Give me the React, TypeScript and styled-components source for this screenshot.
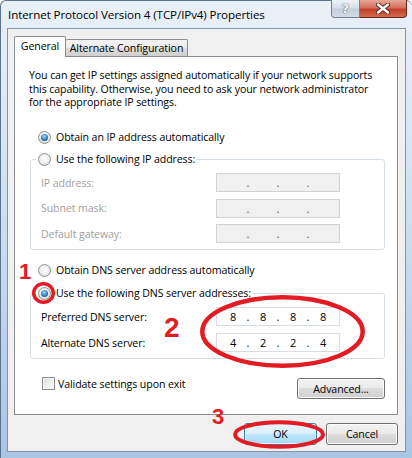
import { Fragment } from 'react';
import styled, { createGlobalStyle, css } from 'styled-components';

const GlobalStyle = createGlobalStyle`
  html, body {
    margin: 0;
    padding: 0;
  }
  body {
    width: 412px;
    height: 458px;
    overflow: hidden;
    background: #fff;
    font-family: 'Open Sans', 'Noto Sans', sans-serif;
    font-size: 10.6px;
    letter-spacing: -0.1px;
    color: #000;
  }
  * {
    box-sizing: border-box;
  }
`;

const RED = '#e31b23';

const Window = styled.div`
  position: relative;
  width: 412px;
  height: 458px;
  display: flex;
  flex-direction: column;
  border: 1px solid #5d728c;
  border-right: 0;
  border-bottom: 0;
  border-radius: 6px 6px 0 0;
  background: linear-gradient(
    180deg,
    #e9f0f8 0%,
    #d9e6f3 30%,
    #c2d6ec 65%,
    #aac5e4 100%
  );
`;

const TitleBar = styled.div`
  height: 27px;
  display: flex;
  align-items: flex-start;
  padding-left: 7px;
`;

const Title = styled.div`
  align-self: center;
  font-size: 11.6px;
  white-space: nowrap;
`;

const CaptionButtons = styled.div`
  display: flex;
  margin-left: auto;
  margin-right: 5px;
  margin-top: -1px;
`;

const CaptionButton = styled.div<{ $close?: boolean }>`
  height: 18px;
  width: ${(p) => (p.$close ? '47px' : '29px')};
  display: flex;
  align-items: center;
  justify-content: center;
  border: 1px solid #6e7f93;
  border-top: 0;
  font-family: 'DejaVu Sans', sans-serif;
  font-size: 13px;
  font-weight: 700;
  color: #f4f6f8;
  text-shadow: 0 0 1px #4a5868, 0 0 1px #4a5868;
  ${(p) =>
    p.$close
      ? css`
          border-color: #6a2a1e;
          border-left: 0;
          border-radius: 0 0 4px 0;
          background: linear-gradient(180deg, #e8a898 0%, #d4705e 45%, #c2402a 55%, #d06a4e 100%);
        `
      : css`
          border-radius: 0 0 0 4px;
          background: linear-gradient(180deg, #eef2f7 0%, #d6dfea 45%, #c3cfdd 55%, #d3dce8 100%);
        `}
`;

const Body = styled.div`
  flex: 1;
  margin: 0 6px 6px 6px;
  border: 1px solid #8394a9;
  background: #f0f0f0;
  padding: 7px 7px 6px 6px;
  display: flex;
  flex-direction: column;
`;

const TabStrip = styled.div`
  height: 20px;
  display: flex;
  align-items: flex-end;
`;

const Tab = styled.div<{ $active?: boolean }>`
  position: relative;
  display: flex;
  align-items: center;
  justify-content: center;
  border: 1px solid #898c95;
  border-bottom: 0;
  border-radius: 2px 2px 0 0;
  ${(p) =>
    p.$active
      ? css`
          width: 52px;
          height: 21px;
          margin-bottom: -1px;
          padding-bottom: 2px;
          background: #fff;
          z-index: 1;
        `
      : css`
          width: 122px;
          height: 17px;
          border-left: 0;
          background: linear-gradient(180deg, #f3f3f3 0%, #ebebeb 50%, #dddddd 51%, #cfcfcf 100%);
        `}
`;

const Panel = styled.div`
  height: 359px;
  border: 1px solid #898c95;
  background: #fff;
  display: flex;
  flex-direction: column;
`;

const Description = styled.p`
  margin: 12px 0 0 14px;
  line-height: 13.5px;
  white-space: nowrap;
`;

const OptionRow = styled.label<{ $top: number }>`
  display: flex;
  align-items: center;
  gap: 5px;
  height: 15px;
  margin-top: ${(p) => p.$top}px;
  padding-left: 23px;
  white-space: nowrap;
`;

const Radio = styled.span<{ $checked?: boolean }>`
  position: relative;
  flex: none;
  width: 13px;
  height: 13px;
  border-radius: 50%;
  border: 1px solid #8e8f8f;
  background: radial-gradient(circle at 50% 40%, #ffffff 0%, #ececec 55%, #cfcfcf 100%);
  ${(p) =>
    p.$checked &&
    css`
      &::after {
        content: '';
        position: absolute;
        inset: 2px;
        border-radius: 50%;
        background: radial-gradient(circle at 45% 35%, #b4e0fa 0%, #3b8ad0 45%, #0f3c6c 100%);
      }
    `}
`;

const Group = styled.fieldset<{ $top: number }>`
  margin: ${(p) => p.$top}px 12px 0 15px;
  padding: 0;
  border: 1px solid #d5dfe5;
  border-radius: 3px;
  min-width: 0;
`;

const Legend = styled.legend`
  margin-left: 5px;
  padding: 0 2px;
  display: flex;
  align-items: center;
  gap: 5px;
  height: 15px;
  white-space: nowrap;
`;

const Fields = styled.div<{ $gap: number }>`
  display: flex;
  flex-direction: column;
  gap: ${(p) => p.$gap}px;
  padding: 6.5px 0 6px 10px;
`;

const FieldRow = styled.div<{ $disabled?: boolean }>`
  display: flex;
  align-items: center;
  color: ${(p) => (p.$disabled ? '#a0a0a0' : '#000')};
`;

const FieldLabel = styled.span`
  width: 175px;
  white-space: nowrap;
`;

const IpBox = styled.div<{ $disabled?: boolean }>`
  width: 124px;
  height: 19px;
  display: flex;
  align-items: center;
  padding-left: 2px;
  border: 1px solid ${(p) => (p.$disabled ? '#d2d2d2' : '#d9dce1')};
  background: ${(p) => (p.$disabled ? '#f0f0f0' : '#fff')};
  color: #000;
  font-size: 11px;
`;

const Octet = styled.span`
  width: 28px;
  text-align: center;
`;

const Dot = styled.span<{ $disabled?: boolean }>`
  width: 2px;
  display: flex;
  justify-content: center;
  color: ${(p) => (p.$disabled ? '#555' : '#000')};
`;

const BottomRow = styled.div`
  display: flex;
  align-items: flex-start;
  justify-content: space-between;
  margin-top: 17px;
  padding: 0 12px 0 27px;
`;

const CheckRow = styled.label`
  display: flex;
  align-items: center;
  gap: 3px;
  height: 15px;
  white-space: nowrap;
`;

const Checkbox = styled.span`
  width: 13px;
  height: 13px;
  border: 1px solid #8e8f8f;
  background: linear-gradient(135deg, #dcdcdc 0%, #f2f2f2 60%, #fbfbfb 100%);
  box-shadow: inset 0 0 0 1px #f4f4f4;
`;

const Button = styled.button<{ $default?: boolean; $w: number; $h?: number }>`
  width: ${(p) => p.$w}px;
  height: ${(p) => p.$h ?? 22}px;
  padding: 0;
  font-family: inherit;
  font-size: 10.6px;
  letter-spacing: -0.1px;
  color: #000;
  border-radius: 3px;
  border: 1px solid #707070;
  box-shadow: inset 0 0 0 1px #fcfcfc;
  background: linear-gradient(180deg, #f2f2f2 0%, #ebebeb 49%, #dddddd 50%, #cfcfcf 100%);
  ${(p) =>
    p.$default &&
    css`
      border-color: #3c7fb1;
      box-shadow: inset 0 0 0 1px #dff2fd;
      background: linear-gradient(180deg, #eaf6fd 0%, #d9f0fc 49%, #bee6fd 50%, #a7d9f5 100%);
    `}
`;

const Advanced = styled(Button)`
  margin-top: 2px;
`;

const DialogButtons = styled.div`
  display: flex;
  justify-content: flex-end;
  gap: 9px;
  margin-top: 8px;
`;

const Overlay = styled.div`
  position: absolute;
  top: -1px;
  left: -1px;
  width: 412px;
  height: 458px;
  pointer-events: none;
  z-index: 5;
`;

const Marker = styled.span<{ $x: number; $y: number; $size: number }>`
  position: absolute;
  left: ${(p) => p.$x}px;
  top: ${(p) => p.$y}px;
  font-family: 'Liberation Sans', Arial, sans-serif;
  font-weight: 700;
  font-size: ${(p) => p.$size}px;
  letter-spacing: 0;
  line-height: 1;
  color: ${RED};
`;

function IpField({ value, disabled }: { value?: string[]; disabled?: boolean }) {
  const parts = value ?? ['', '', '', ''];
  return (
    <IpBox $disabled={disabled}>
      {parts.map((part, i) => (
        <Fragment key={i}>
          {i > 0 && <Dot $disabled={disabled}>.</Dot>}
          <Octet>{part}</Octet>
        </Fragment>
      ))}
    </IpBox>
  );
}

export default function App() {
  return (
    <>
      <GlobalStyle />
      <Window>
        <TitleBar>
          <Title>Internet Protocol Version 4 (TCP/IPv4) Properties</Title>
          <CaptionButtons>
            <CaptionButton>?</CaptionButton>
            <CaptionButton $close>
              <svg width="14" height="11" viewBox="0 0 14 11">
                <path d="M2 1.5 L12 9.5 M12 1.5 L2 9.5" stroke="#5b2418" strokeWidth="4.2" strokeLinecap="round" />
                <path d="M2 1.5 L12 9.5 M12 1.5 L2 9.5" stroke="#fff" strokeWidth="2.4" strokeLinecap="round" />
              </svg>
            </CaptionButton>
          </CaptionButtons>
        </TitleBar>
        <Body>
          <TabStrip>
            <Tab $active>General</Tab>
            <Tab>Alternate Configuration</Tab>
          </TabStrip>
          <Panel>
            <Description>
              You can get IP settings assigned automatically if your network supports
              <br />
              this capability. Otherwise, you need to ask your network administrator
              <br />
              for the appropriate IP settings.
            </Description>
            <OptionRow $top={20}>
              <Radio $checked />
              Obtain an IP address automatically
            </OptionRow>
            <Group $top={7}>
              <Legend>
                <Radio />
                Use the following IP address:
              </Legend>
              <Fields $gap={6.5}>
                <FieldRow $disabled>
                  <FieldLabel>IP address:</FieldLabel>
                  <IpField disabled />
                </FieldRow>
                <FieldRow $disabled>
                  <FieldLabel>Subnet mask:</FieldLabel>
                  <IpField disabled />
                </FieldRow>
                <FieldRow $disabled>
                  <FieldLabel>Default gateway:</FieldLabel>
                  <IpField disabled />
                </FieldRow>
              </Fields>
            </Group>
            <OptionRow $top={12.5}>
              <Radio />
              Obtain DNS server address automatically
            </OptionRow>
            <Group $top={8}>
              <Legend>
                <Radio $checked />
                Use the following DNS server addresses:
              </Legend>
              <Fields $gap={7}>
                <FieldRow>
                  <FieldLabel>Preferred DNS server:</FieldLabel>
                  <IpField value={['8', '8', '8', '8']} />
                </FieldRow>
                <FieldRow>
                  <FieldLabel>Alternate DNS server:</FieldLabel>
                  <IpField value={['4', '2', '2', '4']} />
                </FieldRow>
              </Fields>
            </Group>
            <BottomRow>
              <CheckRow>
                <Checkbox />
                Validate settings upon exit
              </CheckRow>
              <Advanced $w={88} $h={21}>
                Advanced...
              </Advanced>
            </BottomRow>
          </Panel>
          <DialogButtons>
            <Button $default $w={73}>
              OK
            </Button>
            <Button $w={72}>Cancel</Button>
          </DialogButtons>
        </Body>
        <Overlay>
          <svg width="412" height="458" viewBox="0 0 412 458">
            <g fill="none" stroke={RED}>
              <ellipse cx="43.5" cy="293" rx="9.8" ry="9.3" strokeWidth="3.5" />
              <ellipse cx="282.5" cy="331.5" rx="80.2" ry="34.3" strokeWidth="4.5" />
              <ellipse cx="279" cy="434.5" rx="44" ry="12.2" strokeWidth="4" />
            </g>
          </svg>
          <Marker $x={19} $y={261} $size={22}>
            1
          </Marker>
          <Marker $x={164} $y={313.5} $size={28}>
            2
          </Marker>
          <Marker $x={212} $y={406} $size={22}>
            3
          </Marker>
        </Overlay>
      </Window>
    </>
  );
}
